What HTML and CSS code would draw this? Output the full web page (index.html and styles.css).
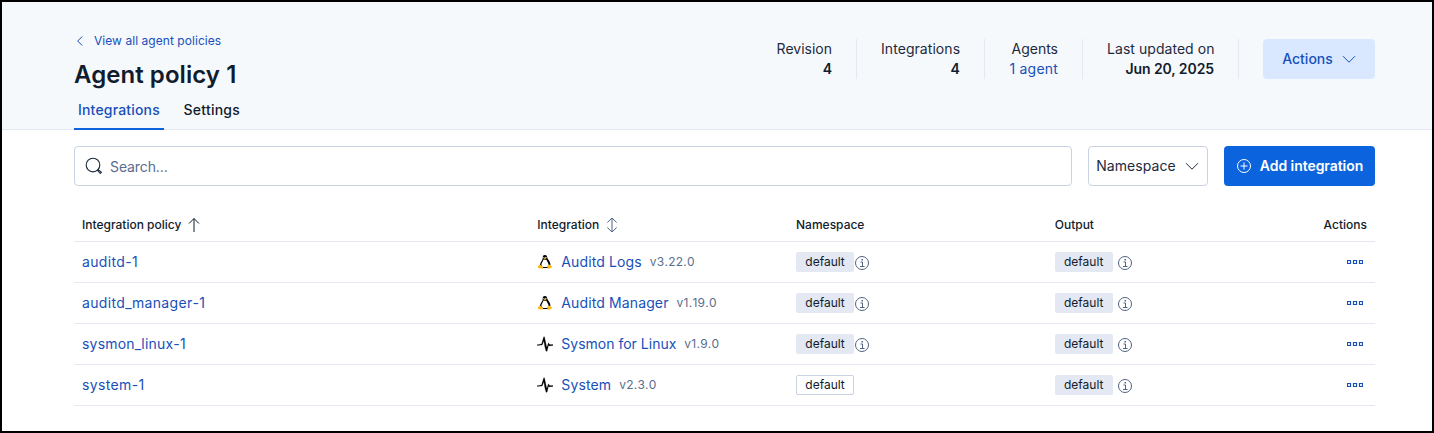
FILE: index.html
```html
<!DOCTYPE html>
<html lang="en">
<head>
<meta charset="utf-8">
<title>Agent policy 1</title>
<link rel="stylesheet" href="styles.css">
</head>
<body>
<svg class="sprite" aria-hidden="true">
  <symbol id="chevron" viewBox="0 0 16 16"><path d="M2 5.2 8 11.2 14 5.2" fill="none" stroke="currentColor"/></symbol>
  <symbol id="info" viewBox="0 0 16 16"><circle cx="8" cy="8" r="6.5" fill="none" stroke="currentColor"/><path d="M6.5 7H8.5V11M6 11.5H10.5" fill="none" stroke="currentColor"/><path d="M7.5 4H9V5.4H7.5z" fill="currentColor"/></symbol>
  <symbol id="dots" viewBox="0 0 16 16"><path d="M.5 6.5h3v3h-3zM6.5 6.5h3v3h-3zM12.5 6.5h3v3h-3z" fill="none" stroke="currentColor" stroke-width="1.200"/></symbol>
  <symbol id="pulse" viewBox="0 0 16 16"><path d="M0 8.700 4.500 8 6.700 .8H7.500L9.200 8.600 9.900 11.500 11.300 6.800 12.700 8.600 16 8.500V9.400L12.300 9.900 11.600 9.200 10.100 15.200H9L7.700 10.500 6.900 5 5.200 9.100 0 9.600z" fill="#000" stroke="#000" stroke-width=".15"/></symbol>
  <symbol id="tux" viewBox="0 0 16 16">
    <path d="M5.800 3C5.800 1.700 6.800 1 8 1.100c1.500.1 2.300 1 2.200 2.500.1 1.500 3.200 3.500 3.200 7 0 1.500-.7 2.800-2 3.300H4.800C3.400 13.500 2.700 12.300 2.900 10.800 3.200 8.300 5.800 6.300 5.800 4z" fill="#000"/>
    <path d="M6.500 5.500Q8 6.500 9.200 5.400C9.800 7.200 11.700 8.800 11.700 11.200 11.600 12.800 10.200 13.100 8 13.100S4.400 12.600 4.400 11C4.400 9 6 7.500 6.500 5.500z" fill="#fff"/>
    <path d="M6.300 4.500 8 3.900 9.400 4.600 8 5.700z" fill="#fcb813"/>
    <circle cx="6.900" cy="3.500" r=".6" fill="#fff"/><circle cx="8.900" cy="3.500" r=".65" fill="#fff"/>
    <path d="M3 10.500 6.100 13.200Q6.200 14.900 4.600 14.600L.9 13.900 1.200 11.900zM12.300 10.600 15.200 12.700Q15.300 13.400 13.600 13.900L11.700 14.800Q10 15 10.300 13.400L10.700 11.300z" fill="#fcb813"/>
  </symbol>
</svg>
<div class="frame">
  <header class="header">
    <div class="wrap header-row">
      <div class="heading">
        <a class="back"><svg class="back-icon" viewBox="0 0 12 12"><path d="M8.200 1.500 3.700 6 8.200 10.500" fill="none" stroke="currentColor"/></svg><span>View all agent policies</span></a>
        <h1>Agent policy 1</h1>
        <nav class="tabs"><a class="tab active">Integrations</a><a class="tab">Settings</a></nav>
      </div>
      <div class="stats">
        <dl class="stat"><dt>Revision</dt><dd>4</dd></dl>
        <dl class="stat wide"><dt>Integrations</dt><dd>4</dd></dl>
        <dl class="stat agents"><dt>Agents</dt><dd class="link">1 agent</dd></dl>
        <dl class="stat updated"><dt>Last updated on</dt><dd>Jun 20, 2025</dd></dl>
        <button class="btn actions-btn"><span>Actions</span><svg class="icon"><use href="#chevron"/></svg></button>
      </div>
    </div>
  </header>
  <main class="wrap">
    <div class="toolbar">
      <label class="search"><svg class="search-icon" viewBox="0 0 18 18"><circle cx="8" cy="8" r="6.800" fill="none" stroke="currentColor" stroke-width="1.150"/><path d="M12.700 12.100 16.400 15.300 15.300 16.500 12.100 12.900" fill="none" stroke="currentColor" stroke-width="1.100"/></svg><span>Search...</span></label>
      <button class="btn ns-btn"><span>Namespace</span><svg class="icon"><use href="#chevron"/></svg></button>
      <button class="btn add-btn"><svg class="icon" viewBox="0 0 16 16"><path d="M8 4.500v7M4.500 8h7" stroke="currentColor" fill="none"/><circle cx="8" cy="8" r="6.500" fill="none" stroke="currentColor"/></svg><span>Add integration</span></button>
    </div>
    <div class="table">
      <div class="row head">
        <div><span>Integration policy</span><svg class="icon sort" viewBox="0 0 16 16"><path d="M8 15V1.500M3 6.500 8 1.500 13 6.500" fill="none" stroke="currentColor"/></svg></div>
        <div><span>Integration</span><svg class="icon sort muted" viewBox="0 0 16 16"><path d="M8 1.500v13M3.300 5.500 8 1 12.700 5.500M3.300 10.500 8 15 12.700 10.500" fill="none" stroke="currentColor"/></svg></div>
        <div>Namespace</div><div>Output</div><div class="end">Actions</div>
      </div>
      <div class="row">
        <div class="link name">auditd-1</div>
        <div><svg class="icon logo"><use href="#tux"/></svg><span class="link title">Auditd Logs</span><span class="version">v3.22.0</span></div>
        <div><span class="badge">default</span><svg class="icon info"><use href="#info"/></svg></div>
        <div><span class="badge">default</span><svg class="icon info spaced"><use href="#info"/></svg></div>
        <div class="end link"><svg class="icon dots"><use href="#dots"/></svg></div>
      </div>
      <div class="row">
        <div class="link name">auditd_manager-1</div>
        <div><svg class="icon logo"><use href="#tux"/></svg><span class="link title">Auditd Manager</span><span class="version">v1.19.0</span></div>
        <div><span class="badge">default</span><svg class="icon info"><use href="#info"/></svg></div>
        <div><span class="badge">default</span><svg class="icon info spaced"><use href="#info"/></svg></div>
        <div class="end link"><svg class="icon dots"><use href="#dots"/></svg></div>
      </div>
      <div class="row">
        <div class="link name tight">sysmon_linux-1</div>
        <div><svg class="icon logo"><use href="#pulse"/></svg><span class="link">Sysmon for Linux</span><span class="version">v1.9.0</span></div>
        <div><span class="badge">default</span><svg class="icon info"><use href="#info"/></svg></div>
        <div><span class="badge">default</span><svg class="icon info spaced"><use href="#info"/></svg></div>
        <div class="end link"><svg class="icon dots"><use href="#dots"/></svg></div>
      </div>
      <div class="row">
        <div class="link name">system-1</div>
        <div><svg class="icon logo"><use href="#pulse"/></svg><span class="link title">System</span><span class="version">v2.3.0</span></div>
        <div><span class="badge hollow">default</span></div>
        <div><span class="badge">default</span><svg class="icon info spaced"><use href="#info"/></svg></div>
        <div class="end link"><svg class="icon dots"><use href="#dots"/></svg></div>
      </div>
    </div>
  </main>
</div>
</body>
</html>
```
FILE: styles.css
```css
* { box-sizing: border-box; }
body { margin: 0; font: 14px/20px Inter, "Liberation Sans", sans-serif; color: #1d2a3e; background: #fff; }
.sprite { display: none; }
.frame { height: 433px; border: 2px solid #000; overflow: hidden; }
.wrap { margin: 0 57px 0 72px; }
.icon { width: 16px; height: 16px; flex: none; }
.link { color: #1750ba; }
.header { height: 128px; background: #f6f9fc; border-bottom: 1px solid #e3e8f2; }
.header-row { display: flex; justify-content: space-between; white-space: nowrap; }
.heading { display: flex; flex-direction: column; padding-top: 29px; }
.back { display: flex; align-items: center; gap: 8px; font-size: 12px; letter-spacing: .05px; color: #1750ba; }
.back-icon { width: 12px; height: 12px; }
h1 { margin: 8px 0 0; font-size: 24px; line-height: 32px; font-weight: 600; letter-spacing: .06px; color: #111c2c; }
.tabs { display: flex; gap: 16px; height: 39px; }
.tab { padding: 9px 4px 0; height: 39px; font-weight: 500; letter-spacing: .18px; color: #111c2c; }
.tab:last-child { padding-left: 3.5px; letter-spacing: .25px; }
.tab.active { width: 90px; color: #1750ba; border-bottom: 2px solid #0b64dd; }
.stats { display: flex; height: 40px; margin-top: 37px; }
.stat { margin: 0 24px 0 0; padding-right: 24px; border-right: 1px solid #e3e8f2; text-align: right; }
.stat.wide { width: 104px; letter-spacing: .06px; }
.stat.agents { width: 74px; }
.stat.updated { width: 132px; }
.stat.updated dt { letter-spacing: .05px; }
.stat.updated dd { letter-spacing: -.08px; }
.stat dt { font-weight: 400; }
.stat dd { margin: 0; font-weight: 600; color: #111c2c; }
.stat dd.link { font-weight: 400; color: #1750ba; letter-spacing: .2px; }
.btn { display: flex; align-items: center; justify-content: center; height: 40px; padding: 0; border: 0; border-radius: 4px; font: 500 14px/20px Inter, sans-serif; gap: 8px; flex: none; }
.actions-btn { width: 112px; padding-left: 1px; background: #d9e8ff; color: #1750ba; }
.toolbar { display: flex; gap: 16px; margin-top: 16px; }
.search { flex: 1; height: 40px; display: flex; align-items: center; gap: 7px; padding-left: 10px; border: 1px solid #cad3e2; border-radius: 4px; color: #5a6d8c; }
.search span { padding-top: 2px; letter-spacing: -.1px; }
.search-icon { width: 18px; height: 18px; color: #1d2a3e; }
.ns-btn { width: 120px; border: 1px solid #cad3e2; background: #fff; color: #1d2a3e; font-weight: 400; letter-spacing: .08px; }
.add-btn { width: 151px; background: #0b64dd; color: #fff; font-weight: 600; letter-spacing: -.05px; }
.table { margin-top: 22px; }
.row { display: grid; grid-template-columns: 455.35px 258.7px 258.7px 1fr 100px; height: 41px; border-bottom: 1px solid #e3e8f2; }
.row > div { display: flex; align-items: center; padding: 0 8px; white-space: nowrap; }
.row.head { height: 34px; font-size: 12px; font-weight: 500; color: #111c2c; }
.row > .end { justify-content: flex-end; }
.sort { margin-left: 5px; }
.muted { color: #516381; }
.logo { margin-right: 8px; }
.name { letter-spacing: .33px; font-kerning: none; }
.name.tight { letter-spacing: .2px; }
.title { letter-spacing: .12px; }
.version { margin-left: 8px; font-size: 12px; letter-spacing: .25px; font-kerning: none; color: #5a6d8c; }
.badge { width: 58px; height: 20px; border-radius: 2px; background: #e3e8f2; font-size: 12px; line-height: 20px; text-align: center; color: #111c2c; }
.badge.hollow { background: #fff; border: 1px solid #cad3e2; line-height: 18px; }
.info { color: #516381; margin-top: 2px; }
.info.spaced { margin-left: 4px; }
.dots { margin-right: 4px; }
```
